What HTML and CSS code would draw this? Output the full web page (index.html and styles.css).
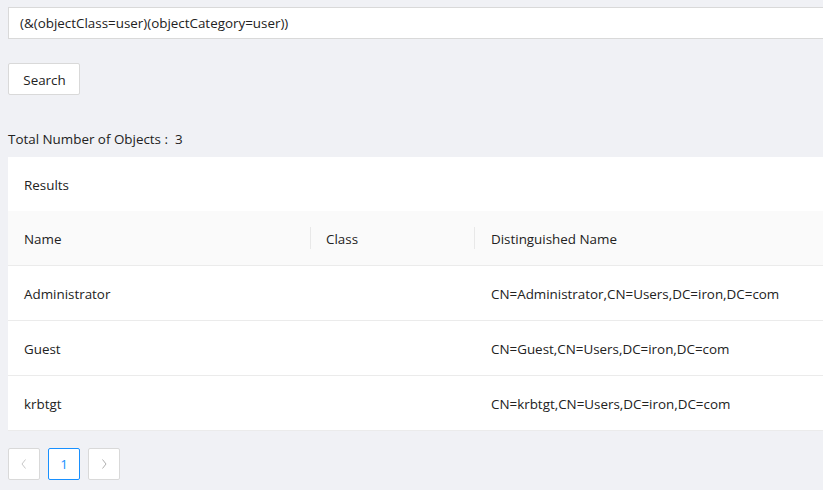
FILE: index.html
```html
<!DOCTYPE html>
<html>
<head>
<meta charset="utf-8">
<link rel="stylesheet" href="styles.css">
</head>
<body>
<div class="page">
  <div class="query">(&amp;(objectClass=user)(objectCategory=user))</div>
  <div class="actions"><button class="btn">Search</button></div>
  <div class="total">Total Number of Objects :&nbsp; 3</div>
  <div class="card">
    <div class="card-title">Results</div>
    <table class="tbl">
      <thead>
        <tr><th class="c1">Name</th><th class="c2">Class</th><th class="c3">Distinguished Name</th></tr>
      </thead>
      <tbody>
        <tr><td>Administrator</td><td></td><td>CN=Administrator,CN=Users,DC=iron,DC=com</td></tr>
        <tr><td>Guest</td><td></td><td>CN=Guest,CN=Users,DC=iron,DC=com</td></tr>
        <tr><td>krbtgt</td><td></td><td>CN=krbtgt,CN=Users,DC=iron,DC=com</td></tr>
      </tbody>
    </table>
  </div>
  <div class="pager">
    <span class="pg disabled"><svg width="10" height="12" viewBox="0 0 10 12"><path d="M6.5 1.5 L3 6 L6.5 10.5" fill="none" stroke="#c8c8c8" stroke-width="1"/></svg></span>
    <span class="pg active">1</span>
    <span class="pg"><svg width="10" height="12" viewBox="0 0 10 12"><path d="M3.5 1.5 L7 6 L3.5 10.5" fill="none" stroke="#b0b0b0" stroke-width="1"/></svg></span>
  </div>
</div>
</body>
</html>
```

FILE: styles.css
```css
html, body {
  margin: 0;
  padding: 0;
  background: #f0f1f5;
  overflow: hidden;
}
body {
  font-family: "Open Sans", "Noto Sans", sans-serif;
  font-size: 13.4px;
  color: #222;
}
.page {
  width: 860px;
  padding: 7px 0 0 8px;
}
.query {
  height: 30px;
  line-height: 30px;
  background: #fff;
  border: 1px solid #d9d9d9;
  border-right: none;
  padding-left: 11px;
}
.actions {
  margin-top: 24px;
}
.btn {
  font: inherit;
  color: #222;
  background: #fff;
  border: 1px solid #d9d9d9;
  border-radius: 2px;
  width: 72px;
  height: 32px;
  padding: 0 0 0 1px;
  line-height: 32px;
}
.total {
  margin-top: 34px;
  height: 20px;
  line-height: 20px;
}
.card {
  margin-top: 8px;
  background: #fff;
}
.card-title {
  height: 54px;
  line-height: 56px;
  padding-left: 16px;
}
.tbl {
  width: 100%;
  border-collapse: collapse;
}
.tbl th, .tbl td {
  text-align: left;
  font-weight: normal;
  padding: 2px 16px 0 16px;
  height: 52px;
  border-bottom: 1px solid #ebebeb;
}
.tbl td:nth-child(3), .tbl th:nth-child(3) {
  padding-left: 17px;
}
.tbl th {
  background: #fafafa;
  position: relative;
}
.tbl th + th::before {
  content: "";
  position: absolute;
  left: 0;
  top: 50%;
  margin-top: -11px;
  height: 22px;
  width: 1px;
  background: #e8e8e8;
}
.c1 { width: 270px; }
.c2 { width: 132px; }
.pager {
  display: flex;
  gap: 8px;
  margin-top: 17px;
}
.pg {
  box-sizing: border-box;
  width: 32px;
  height: 32px;
  border: 1px solid #d9d9d9;
  border-radius: 2px;
  background: #fff;
  display: flex;
  align-items: center;
  justify-content: center;
  color: #1890ff;
}
.pg.active {
  border-color: #1890ff;
}
```
